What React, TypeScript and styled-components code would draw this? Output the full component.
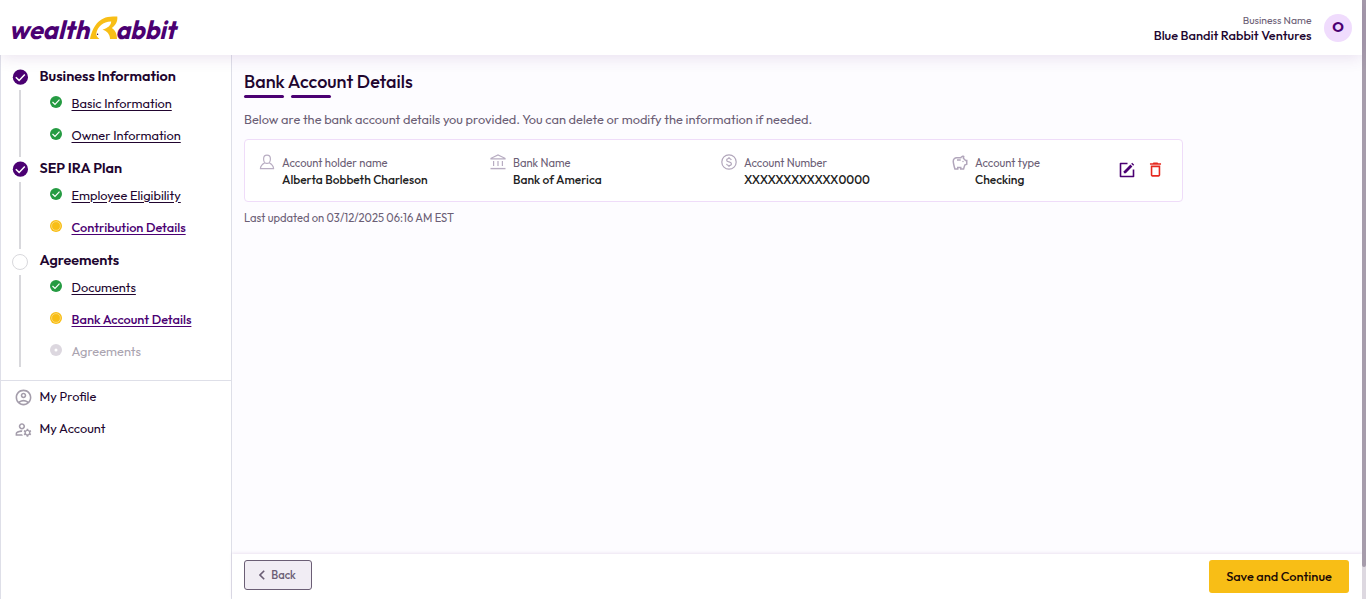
import React from "react";
import styled, { createGlobalStyle } from "styled-components";
import {
  MdOutlineAccountCircle,
  MdOutlineManageAccounts,
  MdDeleteOutline,
  MdOutlineSavings,
} from "react-icons/md";

type StepState = "done" | "current" | "disabled";

type Step = { label: string; state: StepState };

type Section = { title: string; done: boolean; steps: Step[] };

const sections: Section[] = [
  {
    title: "Business Information",
    done: true,
    steps: [
      { label: "Basic Information", state: "done" },
      { label: "Owner Information", state: "done" },
    ],
  },
  {
    title: "SEP IRA Plan",
    done: true,
    steps: [
      { label: "Employee Eligibility", state: "done" },
      { label: "Contribution Details", state: "current" },
    ],
  },
  {
    title: "Agreements",
    done: false,
    steps: [
      { label: "Documents", state: "done" },
      { label: "Bank Account Details", state: "current" },
      { label: "Agreements", state: "disabled" },
    ],
  },
];

const Logo = () => (
  <svg width="174" height="38" viewBox="0 0 174 38">
    <g fill="#4b0072" fontFamily="Outfit, Lato, sans-serif" fontWeight="700" fontStyle="italic" fontSize="26">
      <text x="1" y="29.800" textLength="80" lengthAdjust="spacingAndGlyphs">wealth</text>
      <text x="107.500" y="29.800" textLength="60" lengthAdjust="spacingAndGlyphs">abbit</text>
    </g>
    <path
      d="M82 30C84.500 19 90 7.600 105 7.600H109.300C109.800 13 107.500 16.500 103.800 19C107.500 21.500 109 25 109 30H102C102 25.500 99 22 94.500 20.800C100 19 103 16.500 103.200 12.600C95.500 12.400 89.500 18 88.300 24.500C88 26.500 89.500 28.500 91.500 30Z"
      fill="#f8be16"
    />
    <circle cx="89.600" cy="25.300" r="0.700" fill="#2a0140" />
  </svg>
);

const SectionCheck = () => (
  <svg width="16" height="16" viewBox="0 0 16 16">
    <circle cx="8.400" cy="8.200" r="7.600" fill="#4b0072" />
    <path d="M3.800 8.300 L7.100 11.400 L12.800 5.400" fill="none" stroke="#fff" strokeWidth="1.500" />
  </svg>
);

const StepIcon = ({ state }: { state: StepState }) => {
  if (state === "done") {
    return (
      <svg width="12" height="12" viewBox="0 0 12 12">
        <circle cx="6" cy="6" r="6" fill="#259b42" />
        <path d="M2.500 6 L5 8.400 L9.500 3.700" fill="none" stroke="#fff" strokeWidth="1.200" />
      </svg>
    );
  }
  if (state === "current") {
    return (
      <svg width="12" height="12" viewBox="0 0 12 12">
        <circle cx="6" cy="6" r="6" fill="#f8be16" />
        <circle cx="6" cy="6" r="4.400" fill="none" stroke="#fbdc83" strokeWidth="0.800" />
      </svg>
    );
  }
  return (
    <svg width="12" height="12" viewBox="0 0 12 12">
      <circle cx="6" cy="6" r="6" fill="#dcd7df" />
      <circle cx="6" cy="6" r="1.500" fill="#fff" />
    </svg>
  );
};

const HolderIcon = () => (
  <svg width="16" height="16" viewBox="0 0 16 16" fill="none" stroke="#b8adc2" strokeWidth="1.200">
    <path d="M8 1.100C5.700 1.100 4.600 2.800 4.600 4.900C4.600 7.300 6 9.400 8 9.400C10 9.400 11.400 7.300 11.400 4.900C11.400 2.800 10.300 1.100 8 1.100Z" />
    <path d="M5.800 8.800C3.300 10.200 1.500 11.300 1.400 14.700H14.600C14.500 11.300 12.700 10.200 10.200 8.800" strokeLinejoin="round" />
  </svg>
);

const BankIcon = () => (
  <svg width="16" height="16" viewBox="0 0 16 16" fill="none" stroke="#b8adc2" strokeWidth="1.200">
    <path d="M1 4.900V4.300L8 0.900L15 4.300V4.900Z" />
    <path d="M3.600 7V12M8 7V12M12.400 7V12" />
    <path d="M0.500 14.600H15.500" strokeWidth="1.400" />
  </svg>
);

const DollarIcon = () => (
  <svg width="16" height="16" viewBox="0 0 16 16" fill="none" stroke="#b1a6bb" strokeWidth="1.200">
    <circle cx="8" cy="8" r="7.200" />
    <path d="M10.300 6C10 5 9.200 4.500 8 4.500C6.700 4.500 5.700 5.100 5.700 6.200C5.700 8.700 10.400 7.200 10.400 9.700C10.400 10.900 9.400 11.500 8 11.500C6.700 11.500 5.800 10.900 5.500 9.900M8 3V4.500M8 11.500V13" />
  </svg>
);

const EditIcon = () => (
  <svg width="16" height="16" viewBox="0 0 16 16">
    <path d="M8.500 1.500H1.500V14.500H14.500V7.500" fill="none" stroke="#4b0072" strokeWidth="1.600" strokeLinejoin="round" />
    <path d="M4.800 9.200L11.400 2.600L13.400 4.600L6.800 11.200H4.800Z" fill="#4b0072" />
    <path d="M12.200 1.800L13.200 0.800L15.200 2.800L14.200 3.800Z" fill="#4b0072" />
  </svg>
);

const BackIcon = () => (
  <svg width="6" height="10" viewBox="0 0 6 10">
    <path d="M5.200 0.800L1 5L5.200 9.200" fill="none" stroke="#6b5e75" strokeWidth="1.600" />
  </svg>
);

const details = [
  { label: "Account holder name", value: "Alberta Bobbeth Charleson", icon: <HolderIcon /> },
  { label: "Bank Name", value: "Bank of America", icon: <BankIcon /> },
  { label: "Account Number", value: "XXXXXXXXXXXX0000", icon: <DollarIcon /> },
  { label: "Account type", value: "Checking", icon: <MdOutlineSavings size={18} color="#b1a6bb" /> },
];

const App = () => {
  return (
    <>
      <GlobalBody />
      <Page>
        <Screen>
          <Header>
            <Logo />
            <Account>
              <AccountText>
                <AccountLabel>Business Name</AccountLabel>
                <AccountName>Blue Bandit Rabbit Ventures</AccountName>
              </AccountText>
              <Avatar>O</Avatar>
            </Account>
          </Header>
          <Body>
            <Sidebar>
              <Nav>
                {sections.map((section) => (
                  <NavSection key={section.title}>
                    <Rail $done={section.done}>
                      {section.done ? <SectionCheck /> : <EmptyCircle />}
                      <RailLine />
                    </Rail>
                    <div>
                      <SectionTitle>{section.title}</SectionTitle>
                      {section.steps.map((step) => (
                        <StepRow key={step.label}>
                          <StepIcon state={step.state} />
                          <StepLabel $state={step.state}>{step.label}</StepLabel>
                        </StepRow>
                      ))}
                    </div>
                  </NavSection>
                ))}
              </Nav>
              <UserLinks>
                <UserLink>
                  <MdOutlineAccountCircle size={19} />
                  <span>My Profile</span>
                </UserLink>
                <UserLink>
                  <MdOutlineManageAccounts size={19} />
                  <span>My Account</span>
                </UserLink>
              </UserLinks>
            </Sidebar>
            <Main>
              <Content>
                <Title>Bank Account Details</Title>
                <TitleBars>
                  <TitleBar />
                  <TitleBar />
                </TitleBars>
                <Intro>Below are the bank account details you provided. You can delete or modify the information if needed.</Intro>
                <Card>
                  {details.map((item) => (
                    <Detail key={item.label}>
                      <DetailIcon>{item.icon}</DetailIcon>
                      <div>
                        <DetailLabel>{item.label}</DetailLabel>
                        <DetailValue>{item.value}</DetailValue>
                      </div>
                    </Detail>
                  ))}
                  <Actions>
                    <EditIcon />
                    <MdDeleteOutline size={19} color="#e6291f" />
                  </Actions>
                </Card>
                <Updated>Last updated on 03/12/2025 06:16 AM EST</Updated>
              </Content>
              <Footer>
                <BackButton>
                  <BackIcon />
                  Back
                </BackButton>
                <SaveButton>Save and Continue</SaveButton>
              </Footer>
            </Main>
          </Body>
        </Screen>
        <ScrollTrack>
          <ScrollThumb />
        </ScrollTrack>
      </Page>
    </>
  );
};

const GlobalBody = createGlobalStyle`
*{
  box-sizing:border-box;
}
body{
  margin:0;
  overflow:hidden;
  font-family: Outfit, Lato, "Liberation Sans", sans-serif;
  color:#21052f;
}
svg{
  display:block;
  flex-shrink:0;
}
`

const Page = styled.div`
display:flex;
width:100%;
height:100vh;
background-color:#fff;
`

const Screen = styled.div`
display:flex;
flex-direction:column;
flex:1;
min-width:0;
`

const Header = styled.header`
z-index:1;
display:flex;
justify-content:space-between;
align-items:center;
height:55px;
flex-shrink:0;
padding:0 10px 0 8px;
background-color:#fff;
box-shadow:0 2px 16px rgba(75, 0, 114, 0.12);
`

const Account = styled.div`
display:flex;
align-items:center;
gap:12.5px;
`

const AccountText = styled.div`
display:flex;
flex-direction:column;
align-items:flex-end;
padding-top:1px;
`

const AccountLabel = styled.div`
font-size:10.4px;
line-height:15px;
color:#6b5e75;
`

const AccountName = styled.div`
font-size:12.8px;
line-height:15px;
font-weight:500;
`

const Avatar = styled.div`
display:flex;
align-items:center;
justify-content:center;
width:28px;
height:28px;
padding-bottom:1px;
border-radius:50%;
background-color:#f0dcfd;
color:#4b0072;
font-size:14.4px;
font-weight:700;
`

const Body = styled.div`
display:flex;
flex:1;
min-height:0;
`

const Sidebar = styled.aside`
width:232px;
flex-shrink:0;
border-left:1px solid #dedfe8;
border-right:1px solid #dedfe8;
background-color:#fff;
`

const Nav = styled.nav`
display:flex;
flex-direction:column;
gap:4px;
height:326px;
padding:9px 0 0 11px;
border-bottom:1px solid #dedfe8;
`

const NavSection = styled.section`
display:flex;
gap:11.5px;
`

const Rail = styled.div<{ $done: boolean }>`
display:flex;
flex-direction:column;
align-items:center;
gap:5px;
width:16px;
padding-top:${(p) => (p.$done ? 5 : 6)}px;
margin-bottom:${(p) => (p.$done ? -5 : 1)}px;
`

const RailLine = styled.div`
width:2px;
flex:1;
background-color:#d8d8dc;
`

const EmptyCircle = styled.div`
width:16px;
height:16px;
border:1px solid #d8d8dc;
border-radius:50%;
`

const SectionTitle = styled.div`
height:24px;
line-height:24px;
font-size:14.4px;
font-weight:600;
`

const StepRow = styled.div`
display:flex;
align-items:flex-start;
gap:9.5px;
height:32px;
padding:8px 0 0 10.5px;
`

const StepLabel = styled.span<{ $state: StepState }>`
font-size:12.8px;
line-height:14px;
text-underline-offset:2px;
text-decoration:${(p) => (p.$state === "disabled" ? "none" : "underline")};
font-weight:${(p) => (p.$state === "current" ? 500 : 400)};
color:${(p) => (p.$state === "disabled" ? "#aaa4b0" : p.$state === "current" ? "#4b0072" : "#21052f")};
`

const UserLinks = styled.div`
display:flex;
flex-direction:column;
`

const UserLink = styled.div`
display:flex;
align-items:center;
gap:6.5px;
height:32px;
padding-left:13px;
font-size:12.8px;

svg{
  color:#a49dab;
}
span{
  padding-bottom:2px;
}
`

const Main = styled.main`
display:flex;
flex-direction:column;
flex:1;
min-width:0;
background-color:#fdfcff;
`

const Content = styled.div`
flex:1;
padding:15px 12px 0;
`

const Title = styled.h1`
margin:0;
font-size:18px;
line-height:24px;
font-weight:500;
`

const TitleBars = styled.div`
display:flex;
gap:7px;
margin-top:1px;
`

const TitleBar = styled.div`
width:40px;
height:3px;
border-radius:2px;
background-color:#4b0072;
`

const Intro = styled.p`
margin:13px 0 0;
font-size:12.8px;
line-height:17px;
color:#6b5e75;
`

const Card = styled.div`
display:flex;
width:939px;
height:63px;
margin-top:11px;
padding:14px 0 0 14px;
border:1px solid #efdcf9;
border-radius:4px;
background-color:#fff;
`

const Detail = styled.div`
display:flex;
gap:7px;
width:231px;

&:nth-child(4){
  width:167px;
}
`

const DetailIcon = styled.div`
display:flex;
justify-content:center;
width:16px;
height:16px;
`

const DetailLabel = styled.div`
font-size:11.2px;
line-height:18px;
color:#6b5e75;
`

const DetailValue = styled.div`
font-size:12px;
line-height:16px;
font-weight:500;
color:#222;
`

const Actions = styled.div`
display:flex;
align-items:center;
gap:10.5px;
height:31px;
`

const Updated = styled.div`
margin-top:7px;
font-size:11.2px;
line-height:18px;
color:#6b5e75;
`

const Footer = styled.footer`
display:flex;
justify-content:space-between;
align-items:flex-start;
height:45px;
padding:6px 13px 0 12px;
background-color:#fff;
box-shadow:0 -1px 3px rgba(75, 0, 114, 0.1);
`

const BackButton = styled.button`
display:flex;
align-items:center;
justify-content:center;
gap:6px;
width:68px;
height:30px;
padding:0 1px 0 0;
border:1px solid #6b5e75;
border-radius:3px;
background-color:#f1edf4;
color:#6b5e75;
font:500 11.2px Outfit, Lato, sans-serif;
`

const SaveButton = styled.button`
width:140px;
height:33px;
padding:0 0 2px;
border:none;
border-radius:3px;
background-color:#f8be16;
color:#1b0a05;
font:500 12.8px Outfit, Lato, sans-serif;
`

const ScrollTrack = styled.div`
width:4px;
background-color:#ddd8e0;
`

const ScrollThumb = styled.div`
height:567px;
border-radius:0 0 2px 2px;
background-color:#a69cab;
`

export default App;
